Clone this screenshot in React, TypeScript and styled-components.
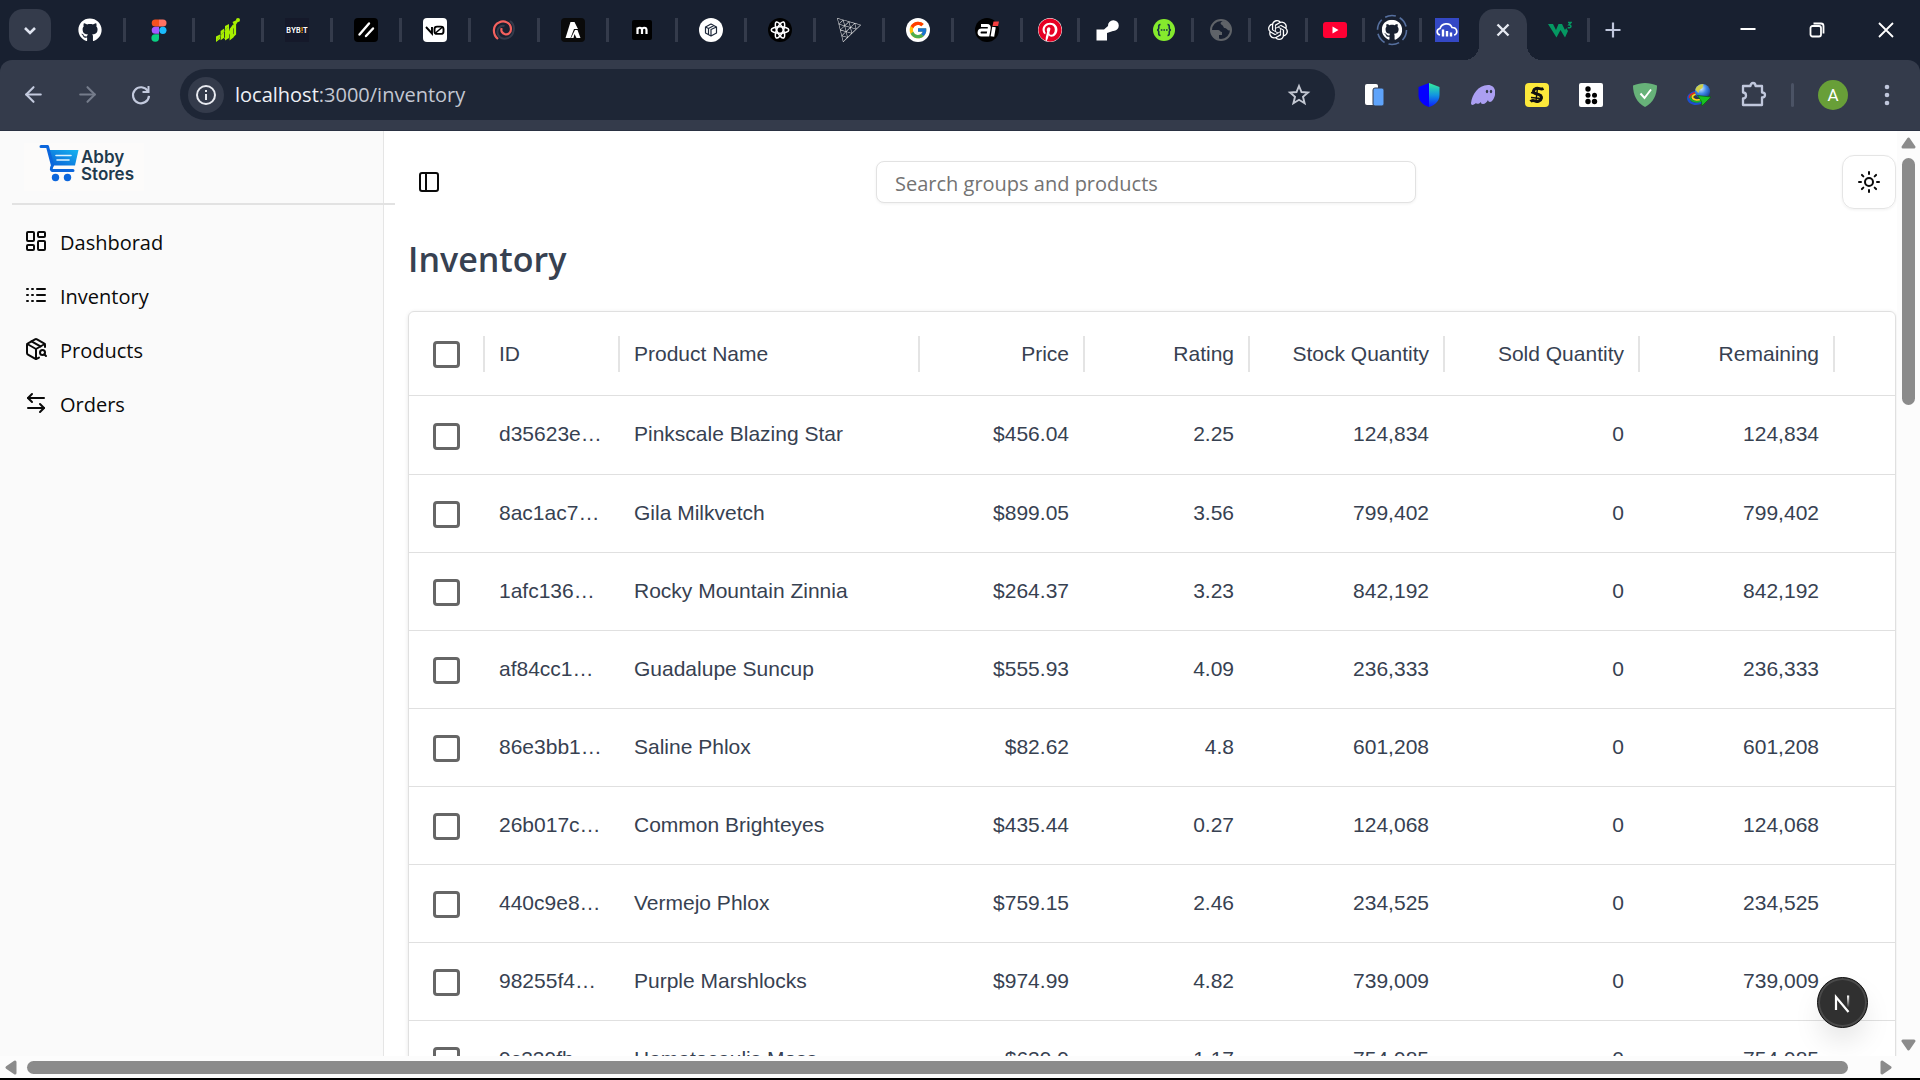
import React from "react";
import styled, { createGlobalStyle } from "styled-components";
import {
  ArrowLeft,
  ArrowLeftRight,
  ArrowRight,
  LayoutDashboard,
  PackageSearch,
  PanelLeft,
  Sun,
} from "lucide-react";
import { FaGithub, FaPinterest } from "react-icons/fa";
import { FcGoogle } from "react-icons/fc";
import { SiOpenai, SiThreedotjs } from "react-icons/si";

const ui = `"Open Sans", "Noto Sans", sans-serif`;
const grid = `"Liberation Sans", Arial, sans-serif`;

const GlobalStyle = createGlobalStyle`
  *, *::before, *::after { box-sizing: border-box; }
  body { margin: 0; background: #000; font-family: ${ui}; overflow: hidden; }
  button, input { font: inherit; margin: 0; }
  button { border: 0; padding: 0; background: none; color: inherit; cursor: pointer; }
  a { color: inherit; text-decoration: none; }
  svg { display: block; flex: none; }
`;

/* ---------- browser frame ---------- */

const Window = styled.div`
  height: 100vh;
  display: flex;
  flex-direction: column;
  border-bottom: 2px solid #000;
`;

const TabStrip = styled.header`
  display: flex;
  align-items: center;
  height: 60px;
  flex: none;
  padding-left: 9px;
  background: #182030;
`;

const TabSearch = styled.button`
  display: grid;
  place-items: center;
  width: 42px;
  height: 42px;
  margin-right: 6px;
  border-radius: 14px;
  background: #343b4b;
  color: #dfe4f0;
`;

const Tab = styled.button<{ $wide?: boolean; $last?: boolean }>`
  display: grid;
  place-items: center;
  place-content: center;
  box-sizing: content-box;
  width: ${(p) => (p.$wide ? 66 : p.$last ? 50 : 54)}px;
  height: 24px;
  border-right: 3px solid ${(p) => (p.$last ? "transparent" : "#343b4b")};
`;

const ActiveTab = styled.div`
  position: relative;
  align-self: flex-end;
  display: grid;
  place-items: center;
  width: 48px;
  height: 51px;
  margin: 0 6px 0 4px;
  padding-bottom: 9px;
  border-radius: 15px 15px 0 0;
  background: #343b4b;
  color: #e6e9f2;

  &::before,
  &::after {
    content: "";
    position: absolute;
    bottom: 0;
    width: 15px;
    height: 15px;
  }
  &::before {
    right: 100%;
    background: radial-gradient(circle at 0 0, transparent 15px, #343b4b 15px);
  }
  &::after {
    left: 100%;
    background: radial-gradient(circle at 100% 0, transparent 15px, #343b4b 15px);
  }
`;

const NewTab = styled.button`
  margin-left: 11px;
  color: #c0c7dc;
`;

const WindowControls = styled.div`
  display: flex;
  margin-left: auto;
  color: #fff;
`;

const WindowButton = styled.button`
  display: grid;
  place-items: center;
  width: 69px;
  height: 48px;
`;

const ToolbarWrap = styled.div`
  flex: none;
  background: #182030;
`;

const Toolbar = styled.div`
  display: flex;
  align-items: center;
  height: 71px;
  padding: 0 21px 1px 6px;
  border-radius: 12px 12px 0 0;
  background: #343b4b;
  border-bottom: 1px solid #2a3142;
`;

const NavButton = styled.button<{ $dim?: boolean }>`
  display: grid;
  place-items: center;
  width: 54px;
  height: 48px;
  color: ${(p) => (p.$dim ? "#757c8b" : "#c3cade")};
`;

const AddressBar = styled.div`
  display: flex;
  align-items: center;
  flex: 1;
  height: 51px;
  margin: 0 13px 0 12px;
  padding: 0 24px 0 8px;
  border-radius: 26px;
  background: #1e2636;
  color: #e8eaf0;
`;

const SiteInfo = styled.button`
  display: grid;
  place-items: center;
  width: 36px;
  height: 36px;
  margin-right: 11px;
  border-radius: 50%;
  background: #343b4b;
`;

const Url = styled.div`
  flex: 1;
  font-size: 20px;
  line-height: 28px;
  color: #c3c7d2;

  b {
    font-weight: 400;
    color: #eef0f5;
  }
`;

const Extension = styled.button`
  display: grid;
  place-items: center;
  width: 54px;
  height: 48px;
`;

const ToolbarRule = styled.span`
  width: 3px;
  height: 24px;
  margin: 0 24px 0 11px;
  border-radius: 2px;
  background: #4b5365;
`;

const Avatar = styled.button`
  width: 30px;
  height: 30px;
  margin-right: 27px;
  border-radius: 50%;
  background: #689f38;
  color: #fff;
  font-family: Roboto, ${ui};
  font-size: 17px;
  line-height: 30px;
`;

/* ---------- page ---------- */

const PageRow = styled.div`
  display: flex;
  flex: 1;
  min-height: 0;
`;

const Page = styled.div`
  position: relative;
  display: flex;
  flex: 1;
  min-width: 0;
  overflow: hidden;
  background: #fff;
`;

const Sidebar = styled.aside`
  position: relative;
  z-index: 1;
  width: 384px;
  flex: none;
  border-right: 1px solid #e5e5e5;
  background: #fafafa;
`;

const Brand = styled.a`
  display: flex;
  width: 120px;
  height: 48px;
  margin: 12px 24px;
  padding-left: 15px;
  gap: 2px;
  background: #fcfbfa;
`;

const BrandName = styled.span`
  padding-top: 6px;
  font-family: Inter, ${ui};
  font-size: 17px;
  font-weight: 600;
  line-height: 17px;
  color: #1f3a4d;
`;

const Divider = styled.hr`
  width: 100%;
  height: 2px;
  margin: 0 0 10px 12px;
  border: 0;
  background: #e2e2e2;
`;

const NavLink = styled.a`
  display: flex;
  align-items: center;
  gap: 12px;
  height: 54px;
  padding: 0 24px 2px;
  font-size: 20px;
  line-height: 28px;
  color: #0a0a0a;

  span {
    padding-top: 3px;
  }
`;

const Main = styled.main`
  flex: 1;
  min-width: 0;
  padding: 24px 1px 0 24px;
`;

const PageHeader = styled.div`
  display: flex;
  align-items: center;
  justify-content: space-between;
`;

const IconButton = styled.button<{ $outlined?: boolean }>`
  display: grid;
  place-items: center;
  width: ${(p) => (p.$outlined ? 54 : 42)}px;
  height: ${(p) => (p.$outlined ? 54 : 42)}px;
  border: ${(p) => (p.$outlined ? "1px solid #e5e5e5" : "0")};
  border-radius: 12px;
  box-shadow: ${(p) => (p.$outlined ? "0 1px 3px rgba(0,0,0,.06)" : "none")};
  color: #0a0a0a;
`;

const Search = styled.input`
  width: 540px;
  height: 42px;
  padding: 2px 18px 0;
  border: 1px solid #e2e2e2;
  border-radius: 8px;
  box-shadow: 0 1px 3px rgba(0, 0, 0, 0.06);
  font-size: 20px;
  outline: 0;

  &::placeholder {
    color: #737373;
    opacity: 1;
  }
`;

const Title = styled.h1`
  margin: 26px 0 28px;
  font-size: 34px;
  font-weight: 600;
  line-height: 48px;
  color: #374151;
`;

const Card = styled.div`
  border: 1px solid #e0e0e0;
  border-radius: 6px;
  box-shadow: 0 1px 4px rgba(0, 0, 0, 0.1);
  overflow: hidden;
`;

const Table = styled.table`
  width: 100%;
  table-layout: fixed;
  border-collapse: separate;
  border-spacing: 0;
  font-family: ${grid};
  font-size: 21px;
  line-height: 24px;
  color: #374151;
`;

const Col = styled.col<{ $w?: number }>`
  width: ${(p) => (p.$w ? `${p.$w}px` : "auto")};
`;

const HeadCell = styled.th`
  height: 84px;
  padding: 0;
  border-bottom: 1px solid #e0e0e0;
  font-weight: 400;
`;

const HeadLabel = styled.div<{ $end?: boolean }>`
  display: flex;
  align-items: center;
  justify-content: ${(p) => (p.$end ? "flex-end" : "flex-start")};
  height: 36px;
  margin-right: -1px;
  padding: 0 14px 0 15px;
  border-right: 2px solid #e4e4e4;
  white-space: nowrap;
`;

const CheckLabel = styled(HeadLabel)`
  padding: 0 0 0 24px;
`;

const Cell = styled.td<{ $end?: boolean }>`
  height: 78px;
  padding: 0 15px 2px;
  border-bottom: 1px solid #e0e0e0;
  text-align: ${(p) => (p.$end ? "right" : "left")};
  white-space: nowrap;

  tr:first-child > & {
    height: 79px;
  }
`;

const CheckCell = styled(Cell)`
  padding: 0 0 0 24px;
`;

const Checkbox = styled.input`
  appearance: none;
  display: block;
  width: 27px;
  height: 27px;
  margin: 2px 0 0;
  border: 3px solid #666;
  border-radius: 4px;
  background: #fff;
`;

const DevBadge = styled.button`
  position: absolute;
  right: 29px;
  bottom: 28px;
  z-index: 2;
  display: grid;
  place-items: center;
  width: 51px;
  height: 51px;
  border: 1px solid #111;
  border-radius: 50%;
  background: #303030;
  box-shadow: inset 0 0 0 2px #4a4a4a, 0 16px 32px -8px rgba(0, 0, 0, 0.18);
`;

/* ---------- scroll bars ---------- */

const VTrack = styled.div`
  display: flex;
  flex-direction: column;
  align-items: center;
  width: 23px;
  padding-bottom: 5px;
  padding-top: 6px;
  background: #fcfcfc;
`;

const VThumb = styled.div`
  width: 13px;
  height: 27%;
  margin-top: 9px;
  margin-bottom: auto;
  border-radius: 7px;
  background: #8b8b8b;
`;

const HTrack = styled.div`
  display: flex;
  align-items: center;
  flex: none;
  height: 22px;
  padding: 0 28px 0 5px;
  background: #fcfcfc;
`;

const HThumb = styled.div`
  flex: 1;
  height: 13px;
  margin: 0 32px 0 10px;
  border-radius: 7px;
  background: #8b8b8b;
`;

/* ---------- drawings ---------- */

const Svg = ({ children, size = 24, box = 24 }: { children: React.ReactNode; size?: number; box?: number }) => (
  <svg width={size} height={size} viewBox={`0 0 ${box} ${box}`} fill="none" aria-hidden="true">
    {children}
  </svg>
);

const Chevron = () => (
  <Svg><path d="M7 10l5 5 5-5" stroke="currentColor" strokeWidth="2.6" /></Svg>
);

const Figma = () => (
  <Svg>
    <path d="M8.2 1.5H12v7H8.2a3.5 3.5 0 010-7z" fill="#f4511e" />
    <path d="M12 1.5h4a3.5 3.5 0 010 7h-4z" fill="#ff7262" />
    <path d="M12 8.8v7H8.2a3.5 3.5 0 010-7z" fill="#a259ff" />
    <circle cx="15.9" cy="12.3" r="3.6" fill="#1abcfe" />
    <path d="M8.2 16.2H12v3.6a3.8 3.8 0 11-3.8-3.6z" fill="#0acf83" />
  </Svg>
);

const Wave = () => (
  <Svg>
    <path d="M0 18.5l4-2v4.5l-4 3zM4.6 13l3.6-2.6v9.4l-3.6 2.4zM9 8l4-2v14l-4 2.6zM13.6 11l3.8-5v13.6l-3.8 3z" fill="#a8f000" />
    <path d="M9 21L21.5 2.5M17 5l2-1v12l-3 3" stroke="#a8f000" strokeWidth="2.2" />
    <circle cx="22" cy="2" r="2" fill="#a8f000" />
    <path d="M1 22L12 9" stroke="#7fbd10" strokeWidth=".8" />
  </Svg>
);

const BybitMark = styled.span`
  width: 24px;
  height: 24px;
  background: #15192a;
  color: #fff;
  font-family: Inter, ${ui};
  font-size: 7px;
  font-weight: 700;
  line-height: 25px;
  text-align: center;

  i {
    font-style: normal;
    color: #f7a600;
  }
`;

const Slashes = () => (
  <Svg>
    <rect width="24" height="24" rx="4" fill="#000" />
    <path d="M5.5 16.5L15 5.500M12 18l7-7.500" stroke="#fff" strokeWidth="2.4" strokeLinecap="round" />
  </Svg>
);

const VZero = () => (
  <Svg>
    <rect width="24" height="24" rx="4" fill="#fff" />
    <path d="M3 9l6 6.5V9" stroke="#000" strokeWidth="1.9" />
    <rect x="11.5" y="8.6" width="9" height="7.3" rx="2.5" stroke="#000" strokeWidth="1.9" />
    <path d="M12.5 15l7-6" stroke="#000" strokeWidth="1.6" />
  </Svg>
);

const Swirl = () => (
  <Svg>
    <path d="M18 3c6 4 5 16-4 17.5-5 .8-9-2.5-8.5-7.5.5-4 4-6 7-5" stroke="#343b4b" strokeWidth="2" />
    <path d="M6 21C0 16 .8 7 7 4.5c5-2.5 12 0 12 6.500 0 4-3 6-6 5.2-3-.7-4.3-3.5-3.3-6" stroke="#f4615e" strokeWidth="2.2" />
  </Svg>
);

const Peaks = () => (
  <Svg>
    <rect width="24" height="24" rx="4" fill="#0a0a0a" />
    <path d="M9.5 4h4L17 11h-4L9.5 20h-5zM14 12h2.5l3 8h-4l-2-4-1 4H10z" fill="#fff" />
  </Svg>
);

const MMark = () => (
  <Svg>
    <rect x="2" y="2" width="20" height="20" rx="2" fill="#000" />
    <path d="M7.5 16V9.500M7.500 12c0-3 4.500-3 4.500 0v4M12 12c0-3 4.500-3 4.500 0v4" stroke="#fff" strokeWidth="2.2" />
  </Svg>
);

const Cube = () => (
  <Svg>
    <circle cx="12" cy="12" r="12" fill="#fff" />
    <path d="M6.5 9L12 6l5.5 3v6L12 18l-5.500-3zM6.500 9l3 1.500v6M9.500 10.500l5.500-3M12 18v-6.500L17.500 9" stroke="#1e293b" strokeWidth="1.2" strokeLinejoin="round" />
  </Svg>
);

const Atom = () => (
  <Svg>
    <circle cx="12" cy="12" r="12" fill="#000" />
    <g stroke="#fff" strokeWidth="1.5">
      <ellipse cx="12" cy="12" rx="8.8" ry="3.2" />
      <ellipse cx="12" cy="12" rx="8.8" ry="3.2" transform="rotate(65 12 12)" />
      <ellipse cx="12" cy="12" rx="8.8" ry="3.2" transform="rotate(115 12 12)" />
    </g>
  </Svg>
);

const AiMark = () => (
  <Svg>
    <circle cx="12" cy="12" r="12" fill="#000" />
    <path d="M6 7.500h6c2 0 2.600 1 2.200 3L13 17H6.500c-3.500 0-3-5 0-5h7" stroke="#fff" strokeWidth="3" />
    <path d="M19 9l-1.600 9.500" stroke="#fff" strokeWidth="3.6" />
    <path d="M18.500 3.500H24L23 8h-5.500z" fill="#f43f3f" />
  </Svg>
);

const Pinterest = styled(FaPinterest)`
  border-radius: 50%;
  background: #fff;
  color: #e60023;
`;

const Joint = () => (
  <Svg>
    <path d="M1.500 11.500H9L13 8a5.400 5.400 0 115 5l-6 2v7.500H1.500z" fill="#fff" />
  </Svg>
);

const Swagger = () => (
  <Svg>
    <circle cx="12" cy="12" r="11" fill="#85ea2d" />
    <path d="M8.500 6.500C6 6.500 7 9 6.700 10.500 6.500 11.500 5.500 12 5 12c.5 0 1.500.5 1.700 1.500.3 1.500-.7 4 1.800 4M15.500 6.500c2.500 0 1.500 2.500 1.800 4 .2 1 1.200 1.500 1.700 1.500-.5 0-1.500.5-1.700 1.500-.3 1.500.7 4-1.800 4" stroke="#173647" strokeWidth="1.6" />
    <path d="M8.800 12h1.600M11.400 12H13M14 12h1.600" stroke="#173647" strokeWidth="1.6" />
  </Svg>
);

const Globe = () => (
  <Svg>
    <circle cx="12" cy="12" r="10" stroke="#5f6368" strokeWidth="2" />
    <path d="M3 12h6c2 0 2 2 4 2v3h-3v4C5 21 2 16 3 12zM14 3c-3 1-3 3-1 4s1 3 3 3 3 4 5.500 2C22 7 18 3 14 3z" fill="#5f6368" />
  </Svg>
);

const YouTube = () => (
  <Svg>
    <rect y="4" width="24" height="16" rx="3" fill="#ff0033" />
    <path d="M9.500 8.500v7l6-3.500z" fill="#fff" />
  </Svg>
);

const GithubRing = () => (
  <Svg size={32} box={32}>
    <circle cx="16" cy="16" r="14.5" stroke="#56709f" strokeWidth="1.6" strokeDasharray="11 4.2" />
    <svg x="5.5" y="5.5" width="21" height="21"><FaGithub size={21} color="#fff" /></svg>
  </Svg>
);

const Cloudinary = () => (
  <Svg>
    <rect width="24" height="24" fill="#3448c5" />
    <path d="M5 17C1 16 1.500 11 5 10.500 6.500 5 15 4 17 9.500c6 0 6 7 2 7.500" stroke="#fff" strokeWidth="1.7" />
    <path d="M8 11.500v7M12 13v5.500M16 14.500v4" stroke="#fff" strokeWidth="2.4" />
  </Svg>
);

const W3Mark = () => (
  <Svg>
    <path d="M0 6h5l3 6 2.500-6H14l3 6 1.200-2L20 13l-3 6.500L12.500 12 8.500 19.500z" fill="#059862" />
    <path d="M20 4.500h3l-2 2.300c3 0 2.500 4-1.300 2.800" stroke="#059862" strokeWidth="1.5" />
  </Svg>
);

const Reload = () => (
  <Svg>
    <path d="M18.800 8A8 8 0 1020 12.800" stroke="currentColor" strokeWidth="2.2" />
    <path d="M20.500 3v7h-7V8h5V3z" fill="currentColor" />
  </Svg>
);

const Info = () => (
  <Svg>
    <circle cx="12" cy="12" r="9" stroke="currentColor" strokeWidth="2" />
    <path d="M12 11v6M12 7v2" stroke="currentColor" strokeWidth="2" />
  </Svg>
);

const Star = () => (
  <Svg>
    <path d="M12 3l2.500 6 6.500.6-5 4.200 1.600 6.500L12 16.800l-5.600 3.500L8 13.800 3 9.600 9.500 9z" stroke="#c3c7d2" strokeWidth="1.9" />
  </Svg>
);

const Cards = () => (
  <Svg>
    <rect x="2" y="1" width="13" height="21" rx="2" fill="#fff" />
    <rect x="10" y="5" width="11" height="18" rx="2" fill="#5ea3fa" stroke="#343b4b" strokeWidth="1" />
  </Svg>
);

const Shield = () => (
  <Svg>
    <defs>
      <linearGradient id="shield" x1="0" y1="0" x2="0" y2="1">
        <stop offset="0" stopColor="#35f09a" /><stop offset=".5" stopColor="#1297e0" /><stop offset="1" stopColor="#0b1cff" />
      </linearGradient>
    </defs>
    <path d="M12 0v24C6 22 1.500 18 1.500 12V4z" fill="#0500ff" />
    <path d="M12 0v24c6-2 10.500-6 10.500-12V4z" fill="url(#shield)" />
  </Svg>
);

const Ghost = () => (
  <Svg>
    <path d="M0 20C1 12 7 2 17 2c6 0 8 5 7 10-1 4-3 7-5 7-1 0-2-1-2-2-1 2-3 4-5 4s-2-1-2-2c-2 2-4 2.500-5 1-2 2-5 3-5 0z" fill="#ab9ff2" />
    <ellipse cx="16" cy="8.500" rx="1.200" ry="1.800" fill="#343b4b" />
    <ellipse cx="20" cy="8.500" rx="1.200" ry="1.800" fill="#343b4b" />
  </Svg>
);

const Gothic = () => (
  <Svg>
    <rect width="24" height="24" rx="4" fill="#fde93b" />
    <path d="M18.500 5.500c-3 1.500-4.500-1-7.500 0s-3.500 4-.5 5 6.500 1.500 6 4.500-4.500 4-6.500 3-3.500-.5-4.500.5" stroke="#111" strokeWidth="3" />
    <path d="M12.500 5L11 18M6 9.500l11 3M6 14.500l10 1" stroke="#111" strokeWidth="1.4" />
  </Svg>
);

const Dots = () => (
  <Svg>
    <rect width="24" height="24" rx="2" fill="#fff" />
    <g fill="#000">
      <circle cx="9" cy="6" r="2.7" /><circle cx="9" cy="12.3" r="2.5" /><circle cx="15.5" cy="12.3" r="2.5" />
      <circle cx="9" cy="18.5" r="2.7" /><circle cx="15.5" cy="18.5" r="2.7" />
    </g>
  </Svg>
);

const Guard = () => (
  <Svg>
    <path d="M12 0c4 0 8 1 12 2.500C24 12 20 20 12 24 4 20 0 12 0 2.500 4 1 8 0 12 0z" fill="#67b279" />
    <path d="M7.500 10.500l4 4.500L18 6.500" stroke="#fff" strokeWidth="2" />
  </Svg>
);

const Download = () => (
  <Svg>
    <defs>
      <radialGradient id="orb" cx=".4" cy=".3" r=".7">
        <stop offset="0" stopColor="#d5ecff" /><stop offset=".5" stopColor="#3f87e8" /><stop offset="1" stopColor="#173f96" />
      </radialGradient>
    </defs>
    <path d="M9 9C3 10 0 14 2 17.500s8 4.500 13 1.500" stroke="#1d4fd0" strokeWidth="2.5" />
    <path d="M9 10c-5 1-7 4-5 6.500s7 3 11 1" stroke="#18b52a" strokeWidth="1.8" />
    <path d="M9 9.500c-5 1-7 3.500-6.500 5.500" stroke="#e8251c" strokeWidth="1.6" />
    <path d="M9.500 11c-4 1-5 3-3.500 4.500s5 2 8 .5" stroke="#ffd91a" strokeWidth="1.8" />
    <circle cx="15.5" cy="8.5" r="7.6" fill="url(#orb)" />
    <path d="M8.500 7c0-3 4-6 8-6l-1 4-3 2-1 3z" fill="#cfd04a" />
    <path d="M10.500 12.500L24 14l-9 9-.5-4.500z" fill="#18c322" stroke="#0b5d12" strokeWidth=".7" />
  </Svg>
);

const Puzzle = () => (
  <Svg size={27} box={27}>
    <path d="M4 5h6.500c0-4 5-4 5 0H22v6.500c4 0 4 5 0 5V24H3v-6.500c4 0 4-6 0-6V5z" stroke="#c0c7dc" strokeWidth="2.3" strokeLinejoin="round" />
  </Svg>
);

const Kebab = () => (
  <Svg>
    <g fill="#c0c7dc"><circle cx="12" cy="4" r="2.3" /><circle cx="12" cy="12" r="2.3" /><circle cx="12" cy="20" r="2.3" /></g>
  </Svg>
);

const CloseX = () => (
  <Svg><path d="M6.500 6.500l11 11M17.500 6.500l-11 11" stroke="currentColor" strokeWidth="2.4" /></Svg>
);

const Plus = () => (
  <Svg><path d="M12 4.500v15M4.500 12h15" stroke="currentColor" strokeWidth="2.2" /></Svg>
);

const Logs = () => (
  <Svg>
    <path d="M13 6h8M13 12h8M13 18h8M3 6h1M3 12h1M3 18h1M8 6h1M8 12h1M8 18h1" stroke="currentColor" strokeWidth="2" strokeLinecap="round" />
  </Svg>
);

const Cart = () => (
  <Svg size={40} box={40}>
    <defs>
      <linearGradient id="cart" x1="0" y1="1" x2="1" y2="0">
        <stop offset="0" stopColor="#0b5fd6" /><stop offset="1" stopColor="#14b4f0" />
      </linearGradient>
    </defs>
    <path d="M10 7H39.500L36 22.500H13z" fill="url(#cart)" />
    <path d="M2 3.500h6.500l5 19c-2 3-1.500 5 1 5H34" stroke="#0b66dc" strokeWidth="3" strokeLinecap="round" strokeLinejoin="round" />
    <path d="M17 12.500h15M18 17h12" stroke="#dff3ff" strokeWidth="1.6" strokeLinecap="round" />
    <circle cx="16.5" cy="34.5" r="3.7" fill="#0b66dc" />
    <circle cx="28.5" cy="34.5" r="3.7" fill="#0b66dc" />
  </Svg>
);

const NextMark = () => (
  <Svg>
    <defs>
      <linearGradient id="fade" x1="0" y1="0" x2="0" y2="1">
        <stop offset="0" stopColor="#fff" /><stop offset="1" stopColor="#fff" stopOpacity="0" />
      </linearGradient>
    </defs>
    <path d="M5 19V6L17.500 21" stroke="#fff" strokeWidth="2.2" />
    <rect x="16" y="4.5" width="2.2" height="12" fill="url(#fade)" />
  </Svg>
);

const turns = { up: 0, right: 90, down: 180, left: 270 };
const ScrollArrow = ({ to }: { to: keyof typeof turns }) => {
  const flat = to === "up" || to === "down";
  return (
    <svg width={flat ? 15 : 12} height={flat ? 12 : 15} viewBox={flat ? "-7.5 -6 15 12" : "-6 -7.5 12 15"} aria-hidden="true">
      <path d="M0-4L5.500 4h-11z" fill="#8b8b8b" stroke="#8b8b8b" strokeWidth="3" strokeLinejoin="round" transform={`rotate(${turns[to]})`} />
    </svg>
  );
};

const GoogleMark = () => (
  <Svg>
    <circle cx="12" cy="12" r="12" fill="#fff" />
    <svg x="2" y="2" width="20" height="20"><FcGoogle size={20} /></svg>
  </Svg>
);

/* ---------- data ---------- */

const wideTabs: [string, React.ReactNode][] = [
  ["GitHub", <FaGithub size={24} color="#fff" />],
  ["Figma", <Figma />],
  ["Charts", <Wave />],
  ["Bybit", <BybitMark>BYB<i>!</i>T</BybitMark>],
  ["Linear", <Slashes />],
  ["v0", <VZero />],
  ["Swirl", <Swirl />],
  ["Peaks", <Peaks />],
  ["Motion", <MMark />],
  ["Blocks", <Cube />],
  ["Atom", <Atom />],
  ["three.js", <SiThreedotjs size={24} color="#e8e8e8" />],
  ["Google", <GoogleMark />],
  ["AI", <AiMark />],
];

const narrowTabs: [string, React.ReactNode][] = [
  ["Pinterest", <Pinterest size={24} />],
  ["Joint", <Joint />],
  ["Swagger", <Swagger />],
  ["Website", <Globe />],
  ["OpenAI", <SiOpenai size={20} color="#fff" />],
  ["YouTube", <YouTube />],
  ["GitHub loading", <GithubRing />],
  ["Cloudinary", <Cloudinary />],
];

const extensions: [string, React.ReactNode][] = [
  ["Reading cards", <Cards />],
  ["Shield wallet", <Shield />],
  ["Phantom", <Ghost />],
  ["Gothic", <Gothic />],
  ["Braille", <Dots />],
  ["Guard", <Guard />],
  ["Download manager", <Download />],
  ["Extensions", <Puzzle />],
];

const nav = [
  { label: "Dashborad", icon: <LayoutDashboard size={24} /> },
  { label: "Inventory", icon: <Logs /> },
  { label: "Products", icon: <PackageSearch size={24} /> },
  { label: "Orders", icon: <ArrowLeftRight size={24} /> },
];

const columns = [
  { label: "ID", width: 135 },
  { label: "Product Name", width: 300 },
  { label: "Price", width: 165, end: true },
  { label: "Rating", width: 165, end: true },
  { label: "Stock Quantity", width: 195, end: true },
  { label: "Sold Quantity", width: 195, end: true },
  { label: "Remaining", width: 195, end: true },
];

const rows = [
  ["d35623e…", "Pinkscale Blazing Star", "$456.04", "2.25", "124,834", "0", "124,834"],
  ["8ac1ac7…", "Gila Milkvetch", "$899.05", "3.56", "799,402", "0", "799,402"],
  ["1afc136…", "Rocky Mountain Zinnia", "$264.37", "3.23", "842,192", "0", "842,192"],
  ["af84cc1…", "Guadalupe Suncup", "$555.93", "4.09", "236,333", "0", "236,333"],
  ["86e3bb1…", "Saline Phlox", "$82.62", "4.8", "601,208", "0", "601,208"],
  ["26b017c…", "Common Brighteyes", "$435.44", "0.27", "124,068", "0", "124,068"],
  ["440c9e8…", "Vermejo Phlox", "$759.15", "2.46", "234,525", "0", "234,525"],
  ["98255f4…", "Purple Marshlocks", "$974.99", "4.82", "739,009", "0", "739,009"],
  ["9c339fb…", "Hamatocaulis Moss", "$639.9", "1.17", "754,985", "0", "754,985"],
];

export default function App() {
  return (
    <Window>
      <GlobalStyle />
      <TabStrip>
        <TabSearch aria-label="Search tabs"><Chevron /></TabSearch>
        {wideTabs.map(([name, icon]) => (
          <Tab key={name} aria-label={name} $wide>{icon}</Tab>
        ))}
        {narrowTabs.map(([name, icon], i) => (
          <Tab key={name} aria-label={name} $last={i === narrowTabs.length - 1}>{icon}</Tab>
        ))}
        <ActiveTab><button aria-label="Close tab"><CloseX /></button></ActiveTab>
        <Tab aria-label="W3Schools"><W3Mark /></Tab>
        <NewTab aria-label="New tab"><Plus /></NewTab>
        <WindowControls>
          <WindowButton aria-label="Minimize">
            <Svg><path d="M4.500 11h15" stroke="currentColor" strokeWidth="2" /></Svg>
          </WindowButton>
          <WindowButton aria-label="Restore">
            <Svg>
              <rect x="5.5" y="8" width="10.5" height="10.5" rx="2" stroke="currentColor" strokeWidth="1.8" />
              <path d="M8.500 5.500H16a2.500 2.500 0 012.500 2.500v7.500" stroke="currentColor" strokeWidth="1.8" />
            </Svg>
          </WindowButton>
          <WindowButton aria-label="Close">
            <Svg><path d="M5 5l14 14M19 5L5 19" stroke="currentColor" strokeWidth="1.8" /></Svg>
          </WindowButton>
        </WindowControls>
      </TabStrip>

      <ToolbarWrap>
        <Toolbar>
          <NavButton aria-label="Back"><ArrowLeft size={25} /></NavButton>
          <NavButton aria-label="Forward" $dim><ArrowRight size={25} /></NavButton>
          <NavButton aria-label="Reload"><Reload /></NavButton>
          <AddressBar>
            <SiteInfo aria-label="Site information"><Info /></SiteInfo>
            <Url><b>localhost</b>:3000/inventory</Url>
            <button aria-label="Bookmark"><Star /></button>
          </AddressBar>
          {extensions.map(([name, icon]) => (
            <Extension key={name} aria-label={name}>{icon}</Extension>
          ))}
          <ToolbarRule />
          <Avatar>A</Avatar>
          <button aria-label="Menu"><Kebab /></button>
        </Toolbar>
      </ToolbarWrap>

      <PageRow>
        <Page>
          <Sidebar>
            <Brand href="#">
              <Cart />
              <BrandName>Abby<br />Stores</BrandName>
            </Brand>
            <Divider />
            <nav>
              {nav.map((item) => (
                <NavLink key={item.label} href="#">
                  {item.icon}
                  <span>{item.label}</span>
                </NavLink>
              ))}
            </nav>
          </Sidebar>
          <Main>
            <PageHeader>
              <IconButton aria-label="Toggle sidebar"><PanelLeft size={24} /></IconButton>
              <Search type="search" aria-label="Search groups and products" placeholder="Search groups and products" />
              <IconButton aria-label="Toggle theme" $outlined><Sun size={24} /></IconButton>
            </PageHeader>
            <Title>Inventory</Title>
            <Card>
              <Table>
                <colgroup>
                  <Col $w={75} />
                  {columns.map((c) => <Col key={c.label} $w={c.width} />)}
                  <Col />
                </colgroup>
                <thead>
                  <tr>
                    <HeadCell><CheckLabel as="label"><Checkbox type="checkbox" aria-label="Select all rows" /></CheckLabel></HeadCell>
                    {columns.map((c) => (
                      <HeadCell key={c.label} scope="col"><HeadLabel $end={c.end}>{c.label}</HeadLabel></HeadCell>
                    ))}
                    <HeadCell as="td" />
                  </tr>
                </thead>
                <tbody>
                  {rows.map((row) => (
                    <tr key={row[0]}>
                      <CheckCell><Checkbox type="checkbox" aria-label={`Select ${row[1]}`} /></CheckCell>
                      {row.map((value, i) => (
                        <Cell key={columns[i].label} $end={columns[i].end}>{value}</Cell>
                      ))}
                      <Cell />
                    </tr>
                  ))}
                </tbody>
              </Table>
            </Card>
          </Main>
          <DevBadge aria-label="Open Next.js Dev Tools"><NextMark /></DevBadge>
        </Page>
        <VTrack>
          <ScrollArrow to="up" />
          <VThumb />
          <ScrollArrow to="down" />
        </VTrack>
      </PageRow>
      <HTrack>
        <ScrollArrow to="left" />
        <HThumb />
        <ScrollArrow to="right" />
      </HTrack>
    </Window>
  );
}
